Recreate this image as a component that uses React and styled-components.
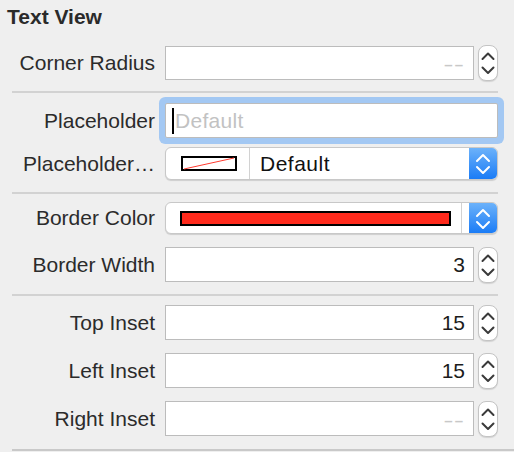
import React from "react";
import styled, { createGlobalStyle } from "styled-components";

const GlobalStyle = createGlobalStyle`
  html, body {
    margin: 0;
    padding: 0;
    background: #efefef;
  }
  body {
    font-family: "Liberation Sans", Arial, sans-serif;
    color: #262626;
  }
`;

const Panel = styled.div`
  width: 514px;
  height: 452px;
  display: flex;
  flex-direction: column;
  background: #efefef;
  overflow: hidden;
`;

const Title = styled.div`
  box-sizing: border-box;
  height: 38px;
  padding: 5px 0 0 7px;
  font-size: 21px;
  line-height: 24px;
  font-weight: bold;
  color: #2a2a2a;
`;

const Section = styled.div`
  display: flex;
  flex-direction: column;
  gap: ${(p) => p.gap || 0}px;
  padding: ${(p) => p.top}px 16px ${(p) => p.bottom}px 0;
`;

const Divider = styled.div`
  height: 2px;
  background: ${(p) => (p.last ? "#c9c9c9" : "#d2d2d2")};
  margin: 0 ${(p) => (p.last ? 0 : 16)}px 0 12px;
`;

const Row = styled.div`
  display: flex;
  align-items: center;
  height: ${(p) => p.h || 35}px;
`;

const Label = styled.div`
  box-sizing: border-box;
  width: 165px;
  flex-shrink: 0;
  padding-right: 10px;
  text-align: right;
  font-size: 21px;
  color: #2b2b2b;
  white-space: nowrap;
`;

const Field = styled.div`
  box-sizing: border-box;
  flex: 1;
  height: 100%;
  display: flex;
  align-items: center;
  justify-content: ${(p) => (p.left ? "flex-start" : "flex-end")};
  padding: 0 8px 0 6px;
  background: #fff;
  border: 1px solid #bcbcbc;
  border-radius: ${(p) => (p.focused ? 2 : 0)}px;
  box-shadow: ${(p) => (p.focused ? "0 0 0 6px #a3c8f3" : "none")};
  font-size: 21px;
  color: #1c1c1c;
`;

const Empty = styled.span`
  font-size: 15px;
  font-weight: bold;
  letter-spacing: 2px;
  color: #c8c8c8;
  margin-top: 3px;
`;

const Caret = styled.span`
  width: 2px;
  height: 26px;
  background: #000;
  margin-right: 1px;
`;

const Hint = styled.span`
  color: #c2c2c2;
  letter-spacing: 0.3px;
`;

const StepperBox = styled.div`
  box-sizing: border-box;
  width: 20px;
  height: 36px;
  margin-left: 4px;
  flex-shrink: 0;
  background: #fff;
  border: 1px solid #c4c4c4;
  border-radius: 8px;
  box-shadow: 0 1px 1px rgba(0, 0, 0, 0.12);
  display: flex;
  align-items: center;
  justify-content: center;
`;

const Popup = styled.div`
  box-sizing: border-box;
  flex: 1;
  height: 100%;
  display: flex;
  background: #fff;
  border: 1px solid #c8c8c8;
  border-radius: 6px;
  box-shadow: 0 1px 1px rgba(0, 0, 0, 0.14);
  overflow: hidden;
`;

const WellSegment = styled.div`
  width: 81px;
  flex-shrink: 0;
  display: flex;
  align-items: center;
  justify-content: center;
  border-right: 1px solid #d2d2d2;
  padding-left: 2px;
`;

const PopupText = styled.div`
  flex: 1;
  display: flex;
  align-items: center;
  padding-left: 10px;
  font-size: 21px;
  letter-spacing: 0.5px;
  color: #111;
`;

const ColorSegment = styled.div`
  flex: 1;
  display: flex;
  align-items: center;
  padding: 0 10px 0 14px;
  border-right: 1px solid #d2d2d2;
`;

const ColorBar = styled.div`
  box-sizing: border-box;
  flex: 1;
  height: 15px;
  background: ${(p) => p.color};
  border: 2px solid #000;
`;

const Gap = styled.div`
  width: 7px;
`;

const BlueButton = styled.div`
  width: 28px;
  flex-shrink: 0;
  display: flex;
  align-items: center;
  justify-content: center;
  background: linear-gradient(#6cb2fa, #1b7cf6);
`;

function Stepper() {
  return (
    <StepperBox>
      <svg width="18" height="34" viewBox="0 0 18 34">
        <polyline points="3.5,13 9,7.5 14.5,13" fill="none" stroke="#3a3a3a" strokeWidth="2" strokeLinecap="round" strokeLinejoin="round" />
        <polyline points="3.5,21.5 9,27 14.5,21.5" fill="none" stroke="#3a3a3a" strokeWidth="2" strokeLinecap="round" strokeLinejoin="round" />
      </svg>
    </StepperBox>
  );
}

function BlueArrows() {
  return (
    <BlueButton>
      <svg width="28" height="31" viewBox="0 0 28 31">
        <polyline points="8,13 14,7 20,13" fill="none" stroke="#fff" strokeWidth="2" strokeLinecap="round" strokeLinejoin="round" />
        <polyline points="8,19 14,25 20,19" fill="none" stroke="#fff" strokeWidth="2" strokeLinecap="round" strokeLinejoin="round" />
      </svg>
    </BlueButton>
  );
}

function Swatch() {
  return (
    <svg width="56" height="15" viewBox="0 0 56 15">
      <rect x="1" y="1" width="54" height="13" fill="#fff" stroke="#000" strokeWidth="2" />
      <line x1="3" y1="13" x2="53" y2="2" stroke="#ff3b30" strokeWidth="1" />
    </svg>
  );
}

function NumberRow({ label, value, h }) {
  return (
    <Row h={h}>
      <Label>{label}</Label>
      <Field>{value != null ? value : <Empty>––</Empty>}</Field>
      <Stepper />
    </Row>
  );
}

export default function App() {
  return (
    <Panel>
      <GlobalStyle />
      <Title>Text View</Title>

      <Section top={8} bottom={11}>
        <NumberRow label="Corner Radius" h={34} />
      </Section>
      <Divider />

      <Section top={10} bottom={12} gap={9}>
        <Row h={35}>
          <Label>Placeholder</Label>
          <Field left focused>
            <Caret />
            <Hint>Default</Hint>
          </Field>
        </Row>
        <Row h={33}>
          <Label>Placeholder…</Label>
          <Popup>
            <WellSegment>
              <Swatch />
            </WellSegment>
            <PopupText>Default</PopupText>
            <BlueArrows />
          </Popup>
        </Row>
      </Section>
      <Divider />

      <Section top={8} bottom={12} gap={13}>
        <Row h={32}>
          <Label>Border Color</Label>
          <Popup>
            <ColorSegment>
              <ColorBar color="#ff2a1c" />
            </ColorSegment>
            <Gap />
            <BlueArrows />
          </Popup>
        </Row>
        <NumberRow label="Border Width" value="3" />
      </Section>
      <Divider />

      <Section top={9} bottom={13} gap={13}>
        <NumberRow label="Top Inset" value="15" />
        <NumberRow label="Left Inset" value="15" />
        <NumberRow label="Right Inset" />
      </Section>
      <Divider last />
    </Panel>
  );
}
